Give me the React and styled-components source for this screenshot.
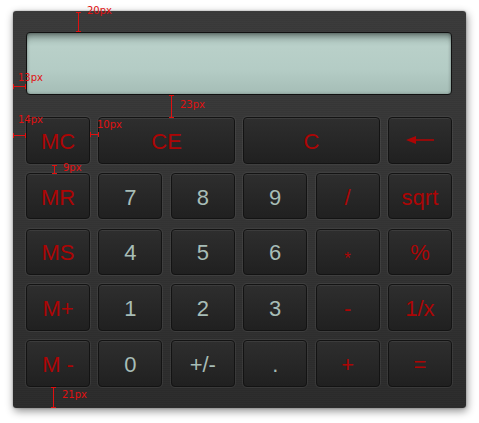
import React from "react";
import styled, { createGlobalStyle } from "styled-components";

const Global = createGlobalStyle`
  html, body { margin: 0; padding: 0; background: #ffffff; }
  body { font-family: "Liberation Sans", Arial, sans-serif; }
`;

const Page = styled.div`
  position: relative;
  width: 479px;
  height: 423px;
  padding: 11px 0 0 13px;
  box-sizing: border-box;
`;

const Body = styled.div`
  width: 453px;
  height: 397px;
  box-sizing: border-box;
  padding: 21px 14px 21px 13px;
  border-radius: 3px;
  background:
    repeating-linear-gradient(0deg, rgba(255,255,255,0.012) 0 1px, rgba(0,0,0,0.02) 1px 2px),
    linear-gradient(180deg, #3a3a3a 0%, #333 60%, #2b2b2b 100%);
  box-shadow: 1px 3px 9px rgba(0,0,0,0.45), 0 0 2px rgba(0,0,0,0.35);
  display: flex;
  flex-direction: column;
  gap: 22px;
`;

const Display = styled.div`
  height: 63px;
  box-sizing: border-box;
  border: 1px solid #111;
  border-radius: 4px;
  background: linear-gradient(180deg, #a3bbb4 0%, #b9d0c9 22%, #b4ccc5 60%, #a5bdb6 100%);
  box-shadow: inset 0 6px 6px -3px rgba(0,0,0,0.4), inset 0 0 3px rgba(0,0,0,0.3);
`;

const Keys = styled.div`
  display: grid;
  grid-template-columns: repeat(6, 1fr);
  grid-template-rows: repeat(5, 46.5px);
  column-gap: 8.3px;
  row-gap: 9.25px;
`;

const Key = styled.button`
  grid-column: span ${(p) => p.$span || 1};
  margin: 0;
  padding: ${(p) => p.$pad ?? 3}px 0 0;
  box-sizing: border-box;
  border: 1px solid #131313;
  border-radius: 4px;
  background: linear-gradient(180deg, #2e2e2e 0%, #282828 45%, #202020 100%);
  box-shadow: inset 0 1px 0 rgba(255,255,255,0.07), 0 0 0 1px rgba(255,255,255,0.06);
  color: ${(p) => (p.$red ? "#ad0505" : "#a7bdb7")};
  font-family: "Liberation Sans", Arial, sans-serif;
  font-size: ${(p) => p.$size || 22}px;
  line-height: 1;
  display: flex;
  align-items: center;
  justify-content: center;
  white-space: pre;
  cursor: pointer;
`;

const Overlay = styled.svg`
  position: absolute;
  left: 0;
  top: 0;
  pointer-events: none;
  font-family: "DejaVu Sans", sans-serif;
  font-size: 10px;
`;

const RED = "#e01010";

function VMeasure({ x, y1, y2, label, lx, ly }) {
  return (
    <g fill={RED}>
      <rect x={x} y={y1} width={1} height={y2 - y1} />
      <rect x={x - 2} y={y1} width={5} height={1} />
      <rect x={x - 2} y={y2 - 1} width={5} height={1} />
      <text x={lx} y={ly}>{label}</text>
    </g>
  );
}

function HMeasure({ y, x1, x2, label, lx, ly }) {
  return (
    <g fill={RED}>
      <rect x={x1} y={y} width={x2 - x1} height={1} />
      <rect x={x1} y={y - 2} width={1} height={5} />
      <rect x={x2 - 1} y={y - 2} width={1} height={5} />
      <text x={lx} y={ly}>{label}</text>
    </g>
  );
}

function BackArrow() {
  return (
    <svg width="28" height="10" viewBox="0 0 28 10" aria-label="←">
      <polygon points="0,5 10,1 10,9" fill="#ad0505" />
      <rect x="9" y="4.2" width="19" height="1.6" fill="#ad0505" />
    </svg>
  );
}

const keys = [
  { t: "MC", red: true },
  { t: "CE", red: true, span: 2 },
  { t: "C", red: true, span: 2 },
  { t: <BackArrow />, red: true, pad: 0 },
  { t: "MR", red: true },
  { t: "7" }, { t: "8" }, { t: "9" },
  { t: "/", red: true },
  { t: "sqrt", red: true },
  { t: "MS", red: true },
  { t: "4" }, { t: "5" }, { t: "6" },
  { t: "*", red: true, size: 17, pad: 14 },
  { t: "%", red: true },
  { t: "M+", red: true },
  { t: "1" }, { t: "2" }, { t: "3" },
  { t: "-", red: true },
  { t: "1/x", red: true },
  { t: "M -", red: true },
  { t: "0" }, { t: "+/-" }, { t: "." },
  { t: "+", red: true },
  { t: "=", red: true },
];

export default function App() {
  return (
    <Page>
      <Global />
      <Body>
        <Display />
        <Keys>
          {keys.map((k, i) => (
            <Key key={i} $red={k.red} $span={k.span} $size={k.size} $pad={k.pad}>
              {k.t}
            </Key>
          ))}
        </Keys>
      </Body>
      <Overlay width="479" height="423" viewBox="0 0 479 423">
        <VMeasure x={78} y1={12} y2={32} label="20px" lx={87} ly={14} />
        <HMeasure y={86} x1={13} x2={26} label="13px" lx={18} ly={81} />
        <VMeasure x={171} y1={95} y2={118} label="23px" lx={180} ly={108} />
        <HMeasure y={135} x1={13} x2={26} label="14px" lx={18} ly={123} />
        <HMeasure y={134} x1={90} x2={99} label="10px" lx={97} ly={128} />
        <VMeasure x={54} y1={165} y2={174} label="9px" lx={63} ly={171} />
        <VMeasure x={53} y1={387} y2={408} label="21px" lx={62} ly={398} />
      </Overlay>
    </Page>
  );
}
